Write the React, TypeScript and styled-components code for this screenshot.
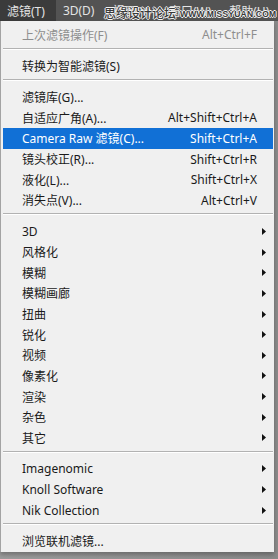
import React from "react";
import styled, { createGlobalStyle } from "styled-components";

const Global = createGlobalStyle`
  html, body { margin: 0; padding: 0; background: #8f8f8f; }
  body { font-family: "Noto Sans", "Noto Sans CJK SC", sans-serif; }
  #root { width: 278px; height: 559px; }
`;

const Screen = styled.div`
  position: relative;
  width: 278px;
  height: 559px;
  display: flex;
  flex-direction: column;
  overflow: hidden;
  background: linear-gradient(90deg, #9c9c9c 0%, #8a8a8a 100%);
`;

const MenuBar = styled.div`
  height: 21px;
  flex: none;
  display: flex;
  align-items: stretch;
  background: #535353;
`;

const BarItem = styled.div<{ $active?: boolean }>`
  display: flex;
  align-items: center;
  padding: 0 11px 0 7px;
  font-size: 12px;
  color: #e4e4e4;
  background: ${(p) => (p.$active ? "#3b3b3b" : "transparent")};
  white-space: nowrap;
`;

const Watermark = styled.div`
  position: absolute;
  left: 104px;
  top: 5px;
  display: flex;
  align-items: flex-end;
  gap: 4px;
  color: #3a3a3a;
  pointer-events: none;
  text-shadow: 1px 0 0 #f2f2f2, -1px 0 0 #f2f2f2, 0 1px 0 #f2f2f2, 0 -1px 0 #f2f2f2;
`;

const WmCn = styled.span`
  font-family: "Noto Sans CJK SC", sans-serif;
  font-size: 12px;
  font-weight: 500;
  line-height: 15px;
`;

const WmEn = styled.span`
  font-family: "Liberation Sans", sans-serif;
  font-size: 8.5px;
  font-weight: 700;
  line-height: 11px;
  letter-spacing: 0.2px;
`;

const Panel = styled.div`
  width: 274px;
  box-sizing: border-box;
  height: 531px;
  flex: none;
  background: #f0f0f0;
  border-left: 1px solid #a3a3a3;
  padding: 3.5px 1px 0 2px;
  display: flex;
  flex-direction: column;
  box-shadow: 0 3px 4px rgba(0, 0, 0, 0.25);
`;

const Row = styled.div<{ $active?: boolean; $disabled?: boolean }>`
  height: 20.65px;
  flex: none;
  display: grid;
  grid-template-columns: 1fr auto 16px;
  align-items: center;
  padding-left: 19px;
  font-size: 12px;
  white-space: nowrap;
  background: ${(p) => (p.$active ? "#1170d6" : "transparent")};
  color: ${(p) => (p.$active ? "#ffffff" : p.$disabled ? "#8e8e8e" : "#1a1a1a")};
`;

const Label = styled.span``;

const Shortcut = styled.span`
  text-align: right;
`;

const ArrowCell = styled.span`
  display: flex;
  align-items: center;
  padding-left: 5px;
`;

const Separator = styled.div`
  height: 10.5px;
  flex: none;
  box-sizing: border-box;
  padding-top: 2.5px;
  &::before {
    content: "";
    display: block;
    height: 1px;
    background: #b2b2b2;
    border-bottom: 1px solid #ffffff;
  }
`;

const Arrow = () => (
  <svg width="4" height="7" viewBox="0 0 4 7">
    <polygon points="0,0 4,3.5 0,7" fill="#111" />
  </svg>
);

type Item =
  | { sep: true }
  | { label: string; shortcut?: string; sub?: boolean; active?: boolean; disabled?: boolean };

const items: Item[] = [
  { label: "上次滤镜操作(F)", shortcut: "Alt+Ctrl+F", disabled: true },
  { sep: true },
  { label: "转换为智能滤镜(S)" },
  { sep: true },
  { label: "滤镜库(G)..." },
  { label: "自适应广角(A)...", shortcut: "Alt+Shift+Ctrl+A" },
  { label: "Camera Raw 滤镜(C)...", shortcut: "Shift+Ctrl+A", active: true },
  { label: "镜头校正(R)...", shortcut: "Shift+Ctrl+R" },
  { label: "液化(L)...", shortcut: "Shift+Ctrl+X" },
  { label: "消失点(V)...", shortcut: "Alt+Ctrl+V" },
  { sep: true },
  { label: "3D", sub: true },
  { label: "风格化", sub: true },
  { label: "模糊", sub: true },
  { label: "模糊画廊", sub: true },
  { label: "扭曲", sub: true },
  { label: "锐化", sub: true },
  { label: "视频", sub: true },
  { label: "像素化", sub: true },
  { label: "渲染", sub: true },
  { label: "杂色", sub: true },
  { label: "其它", sub: true },
  { sep: true },
  { label: "Imagenomic", sub: true },
  { label: "Knoll Software", sub: true },
  { label: "Nik Collection", sub: true },
  { sep: true },
  { label: "浏览联机滤镜..." },
];

const bar = ["滤镜(T)", "3D(D)", "视图(V)", "窗口(W)", "帮助(H)"];

export default function App() {
  return (
    <>
      <Global />
      <Screen>
        <MenuBar>
          {bar.map((b, i) => (
            <BarItem key={b} $active={i === 0}>
              {b}
            </BarItem>
          ))}
        </MenuBar>
        <Panel>
          {items.map((it, i) =>
            "sep" in it ? (
              <Separator key={i} />
            ) : (
              <Row key={i} $active={it.active} $disabled={it.disabled}>
                <Label>{it.label}</Label>
                <Shortcut>{it.shortcut ?? ""}</Shortcut>
                <ArrowCell>{it.sub ? <Arrow /> : null}</ArrowCell>
              </Row>
            )
          )}
        </Panel>
        <Watermark>
          <WmCn>思缘设计论坛</WmCn>
          <WmEn>WWW.MISSYUAN.COM</WmEn>
        </Watermark>
      </Screen>
    </>
  );
}
